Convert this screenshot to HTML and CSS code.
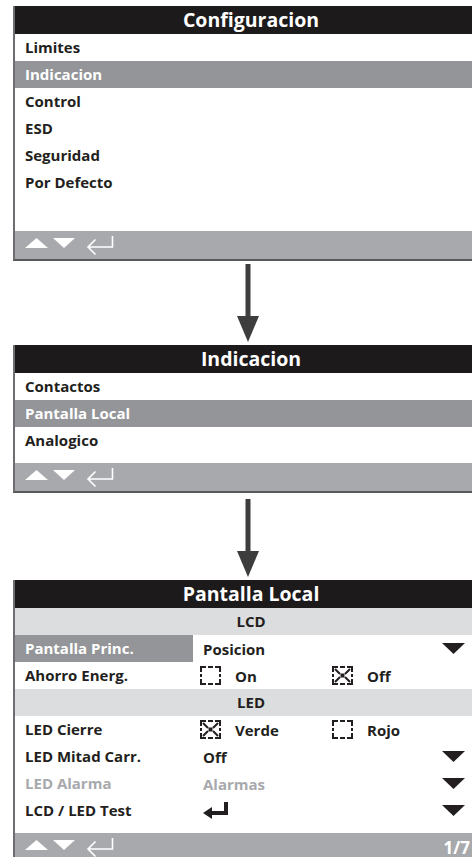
FILE: index.html
```html
<!DOCTYPE html>
<html lang="es">
<head>
<meta charset="utf-8">
<title>Configuracion</title>
<link rel="stylesheet" href="styles.css">
</head>
<body>
<div class="page">

  <section class="panel">
    <div class="head">Configuracion</div>
    <ul class="list">
      <li class="row">Limites</li>
      <li class="row sel">Indicacion</li>
      <li class="row">Control</li>
      <li class="row">ESD</li>
      <li class="row">Seguridad</li>
      <li class="row">Por Defecto</li>
    </ul>
    <div class="spacer big"></div>
    <div class="foot">
      <svg class="nav" width="92" height="24" viewBox="0 0 92 24"><polygon points="0,15 23,15 11.5,5" fill="#fff"/><polygon points="28,5 50,5 39,15" fill="#fff"/><path d="M87.5 3 V14 H63 M70.5 6.5 L63 14 L70.5 21.5" fill="none" stroke="#fff" stroke-width="1.6"/></svg>
    </div>
  </section>

  <div class="arrow"><svg width="24" height="80" viewBox="0 0 24 80"><rect x="9.5" y="0" width="5" height="56" fill="#3d3d3d"/><polygon points="1,52 23,52 12,78" fill="#3d3d3d"/></svg></div>

  <section class="panel">
    <div class="head">Indicacion</div>
    <ul class="list">
      <li class="row">Contactos</li>
      <li class="row sel">Pantalla Local</li>
      <li class="row">Analogico</li>
    </ul>
    <div class="spacer"></div>
    <div class="foot">
      <svg class="nav" width="92" height="24" viewBox="0 0 92 24"><polygon points="0,15 23,15 11.5,5" fill="#fff"/><polygon points="28,5 50,5 39,15" fill="#fff"/><path d="M87.5 3 V14 H63 M70.5 6.5 L63 14 L70.5 21.5" fill="none" stroke="#fff" stroke-width="1.6"/></svg>
    </div>
  </section>

  <div class="arrow arrow2"><svg width="24" height="80" viewBox="0 0 24 80"><rect x="9.5" y="0" width="5" height="56" fill="#3d3d3d"/><polygon points="1,52 23,52 12,78" fill="#3d3d3d"/></svg></div>

  <section class="panel">
    <div class="head">Pantalla Local</div>
    <div class="band">LCD</div>
    <div class="srow">
      <div class="lab sel">Pantalla Princ.</div>
      <div class="val">Posicion</div>
      <svg class="dd" width="23" height="11" viewBox="0 0 23 11"><polygon points="0,0 23,0 11.5,11" fill="#231f20"/></svg>
    </div>
    <div class="srow">
      <div class="lab">Ahorro Energ.</div>
      <div class="val opts">
        <span class="opt"><svg class="cb" width="21" height="19" viewBox="0 0 21 19"><path d="M1 6 V1 H6 M8 1 H13 M15 1 H20 V6 M20 8 V11 M20 13 V18 H15 M13 18 H8 M6 18 H1 V13 M1 11 V8" fill="none" stroke="#231f20" stroke-width="2"/></svg>On</span>
        <span class="opt"><svg class="cb" width="21" height="19" viewBox="0 0 21 19"><path d="M1 6 V1 H6 M8 1 H13 M15 1 H20 V6 M20 8 V11 M20 13 V18 H15 M13 18 H8 M6 18 H1 V13 M1 11 V8" fill="none" stroke="#231f20" stroke-width="2"/><path d="M3 3 L8 8 M13 11 L18 16 M18 3 L13 8 M8 11 L3 16" stroke="#231f20" stroke-width="2"/><rect x="8.5" y="7.5" width="4" height="4" fill="#231f20"/></svg>Off</span>
      </div>
      <span></span>
    </div>
    <div class="band">LED</div>
    <div class="srow">
      <div class="lab">LED Cierre</div>
      <div class="val opts">
        <span class="opt"><svg class="cb" width="21" height="19" viewBox="0 0 21 19"><path d="M1 6 V1 H6 M8 1 H13 M15 1 H20 V6 M20 8 V11 M20 13 V18 H15 M13 18 H8 M6 18 H1 V13 M1 11 V8" fill="none" stroke="#231f20" stroke-width="2"/><path d="M3 3 L8 8 M13 11 L18 16 M18 3 L13 8 M8 11 L3 16" stroke="#231f20" stroke-width="2"/><rect x="8.5" y="7.5" width="4" height="4" fill="#231f20"/></svg>Verde</span>
        <span class="opt"><svg class="cb" width="21" height="19" viewBox="0 0 21 19"><path d="M1 6 V1 H6 M8 1 H13 M15 1 H20 V6 M20 8 V11 M20 13 V18 H15 M13 18 H8 M6 18 H1 V13 M1 11 V8" fill="none" stroke="#231f20" stroke-width="2"/></svg>Rojo</span>
      </div>
      <span></span>
    </div>
    <div class="srow">
      <div class="lab">LED Mitad Carr.</div>
      <div class="val">Off</div>
      <svg class="dd" width="23" height="11" viewBox="0 0 23 11"><polygon points="0,0 23,0 11.5,11" fill="#231f20"/></svg>
    </div>
    <div class="srow off">
      <div class="lab">LED Alarma</div>
      <div class="val">Alarmas</div>
      <svg class="dd" width="23" height="11" viewBox="0 0 23 11"><polygon points="0,0 23,0 11.5,11" fill="#231f20"/></svg>
    </div>
    <div class="srow">
      <div class="lab">LCD / LED Test</div>
      <div class="val"><svg class="ret" width="26" height="17" viewBox="0 0 26 17"><path d="M21 0 H25 V13 H8 V9 H21 Z" fill="#231f20"/><polygon points="0,11 9,5 9,17" fill="#231f20"/></svg></div>
      <svg class="dd" width="23" height="11" viewBox="0 0 23 11"><polygon points="0,0 23,0 11.5,11" fill="#231f20"/></svg>
    </div>
    <div class="spacer"></div>
    <div class="foot">
      <svg class="nav" width="92" height="24" viewBox="0 0 92 24"><polygon points="0,15 23,15 11.5,5" fill="#fff"/><polygon points="28,5 50,5 39,15" fill="#fff"/><path d="M87.5 3 V14 H63 M70.5 6.5 L63 14 L70.5 21.5" fill="none" stroke="#fff" stroke-width="1.6"/></svg>
      <span class="pg">1/7</span>
    </div>
  </section>

</div>
</body>
</html>
```

FILE: styles.css
```css
html, body {
  margin: 0;
  padding: 0;
  background: #fff;
}
body {
  width: 472px;
  height: 857px;
  overflow: hidden;
  font-family: "Open Sans", "Noto Sans", sans-serif;
  font-weight: 700;
  color: #231f20;
}
.page {
  padding-top: 6px;
}
.panel {
  margin-left: 13px;
  width: 472px;
  border-left: 2px solid #6d6e71;
  border-right: 2px solid #6d6e71;
  border-bottom: 2px solid #58595b;
  background: #fff;
}
.head {
  height: 28px;
  background: #1d1a1b;
  color: #fff;
  font-size: 19.5px;
  line-height: 28px;
  text-align: center;
}
.list {
  list-style: none;
  margin: 0;
  padding: 0;
}
.row {
  height: 27px;
  line-height: 27px;
  padding-left: 10px;
  font-size: 15px;
}
.sel {
  background: #939598;
  color: #fff;
}
.spacer {
  height: 9px;
}
.spacer.big {
  height: 35px;
}
.foot {
  height: 28px;
  background: #a7a9ac;
  display: flex;
  align-items: center;
  justify-content: space-between;
  padding: 0 17px 0 10px;
}
.nav {
  display: block;
}
.pg {
  color: #fff;
  font-size: 17px;
}
.arrow {
  height: 84px;
  margin-left: 13px;
  width: 470px;
  display: flex;
  justify-content: center;
  align-items: flex-end;
  padding-bottom: 1px;
  box-sizing: border-box;
}
.arrow2 {
  height: 87px;
}
.arrow svg {
  display: block;
}
.band {
  height: 27px;
  line-height: 27px;
  background: #dcddde;
  text-align: center;
  font-size: 15px;
}
.srow {
  height: 27px;
  display: grid;
  grid-template-columns: 178px 1fr 23px;
  align-items: center;
  padding-right: 22px;
  font-size: 15px;
}
.lab {
  height: 27px;
  line-height: 27px;
  padding-left: 10px;
}
.val {
  padding-left: 10px;
  display: flex;
  align-items: center;
}
.val.opts {
  padding-left: 7px;
}
.opt {
  width: 132px;
  display: flex;
  align-items: center;
  gap: 14px;
}
.cb, .ret, .dd {
  display: block;
}
.off {
  color: #a7a9ac;
}
```
